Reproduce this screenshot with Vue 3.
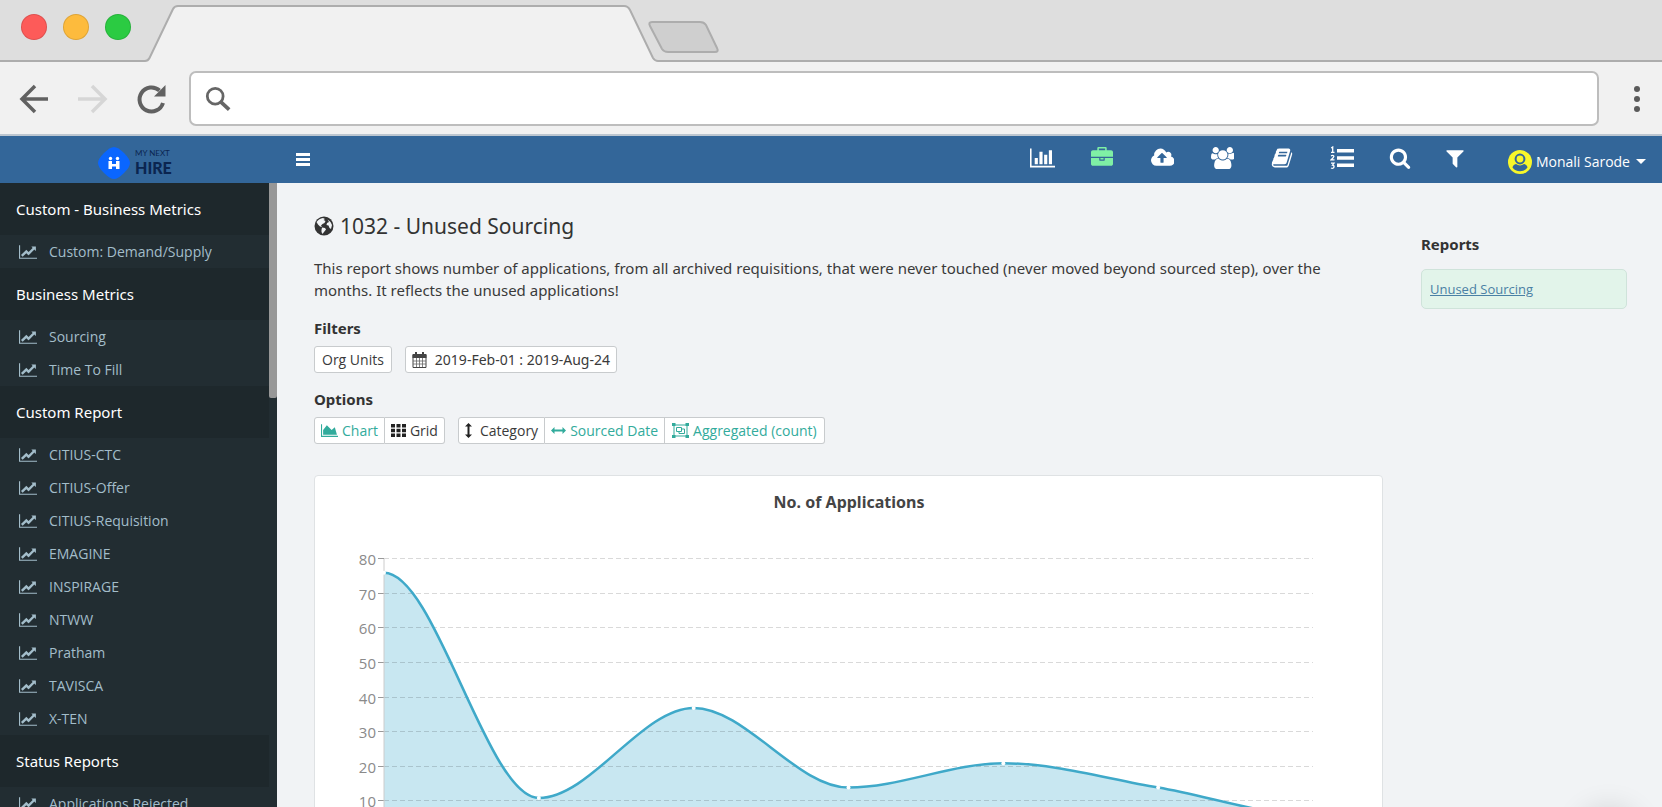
<script setup>
const icons = {
  line: { w: 2048, d: 'M2048 1536v128h-2048v-1536h128v1408h1920zm-128-1248v435q0 21-19.5 29.5t-35.5-7.5l-121-121-633 633q-10 10-23 10t-23-10l-233-233-416 416-192-192 585-585q10-10 23-10t23 10l233 233 464-464-121-121q-16-16-7.5-35.5t29.5-19.5h435q14 0 23 9t9 23z' },
  bar: { w: 2048, d: 'M640 896v512h-256v-512h256zm384-512v1024h-256v-1024h256zm1024 1152v128h-2048v-1536h128v1408h1920zm-640-896v768h-256v-768h256zm384-384v1152h-256v-1152h256z' },
  area: { w: 2048, d: 'M2048 1536v128h-2048v-1536h128v1408h1920zm-384-1024l256 896h-1664v-576l448-576 576 576z' },
  briefcase: { w: 1792, d: 'M640 256h512v-128h-512v128zm1152 640v480q0 66-47 113t-113 47h-1472q-66 0-113-47t-47-113v-480h672v160q0 26 19 45t45 19h320q26 0 45-19t19-45v-160h672zm-768 0v128h-256v-128h256zm768-480v384h-1792v-384q0-66 47-113t113-47h352v-160q0-40 28-68t68-28h576q40 0 68 28t28 68v160h352q66 0 113 47t47 113z' },
  cloud: { w: 1920, d: 'M1280 864q0-14-9-23l-352-352q-9-9-23-9t-23 9l-351 351q-10 12-10 24 0 14 9 23t23 9h224v352q0 13 9.5 22.5t22.5 9.5h192q13 0 22.5-9.5t9.5-22.5v-352h224q13 0 22.5-9.5t9.5-22.5zm640 288q0 159-112.5 271.5t-271.5 112.5h-1088q-185 0-316.5-131.5t-131.5-316.5q0-130 70-240t188-165q-2-30-2-43 0-212 150-362t362-150q156 0 285.5 87t188.5 231q71-62 166-62 106 0 181 75t75 181q0 76-41 138 130 31 213.5 135.5t83.5 238.5z' },
  users: { w: 1920, d: 'M593 896q-162 5-265 128h-134q-82 0-138-40.5t-56-118.5q0-353 124-353 6 0 43.5 21t97.5 42.5 119 21.5q67 0 133-23-5 37-5 66 0 159 93 293zm1071 637q0 120-73 189.5t-194 69.5h-874q-121 0-194-69.5t-73-189.5q0-53 3.5-103.5t14-109 26.5-108.5 43-97.5 62-81 85.5-53.5 111.5-20q10 0 43 21.5t73 48 107 48 135 21.5 135-21.5 107-48 73-48 43-21.5q61 0 111.5 20t85.5 53.5 62 81 43 97.5 26.5 108.5 14 109 3.5 103.5zm-1024-1277q0 106-75 181t-181 75-181-75-75-181 75-181 181-75 181 75 75 181zm704 384q0 159-112.5 271.5t-271.5 112.5-271.5-112.5-112.5-271.5 112.5-271.5 271.5-112.5 271.5 112.5 112.5 271.5zm576 225q0 78-56 118.5t-138 40.5h-134q-103-123-265-128 93-134 93-293 0-29-5-66 66 23 133 23 59 0 119-21.5t97.5-42.5 43.5-21q124 0 124 353zm-128-609q0 106-75 181t-181 75-181-75-75-181 75-181 181-75 181 75 75 181z' },
  book: { w: 1792, d: 'M1703 478q40 57 18 129l-275 906q-19 64-76.5 107.5t-122.5 43.5h-923q-77 0-148.5-53.5t-99.5-131.5q-24-67-2-127 0-4 3-27t4-37q1-8-3-21.5t-3-19.5q2-11 8-21t16.5-23.5 16.5-23.5q23-38 45-91.5t30-91.5q3-10 .5-30t-.5-28q3-11 17-28t17-23q21-36 42-92t25-90q1-9-2.5-32t.5-28q4-13 22-30.5t22-22.5q19-26 42.5-84.5t27.5-96.5q1-8-3-25.5t-2-26.5q2-8 9-18t18-23 17-21q8-12 16.5-30.5t15-35 16-36 19.5-32 26.5-23.5 36-11.5 47.5 5.5l-1 3q38-9 51-9h761q74 0 114 56t18 130l-274 906q-36 119-71.5 153.5t-128.5 34.5h-869q-27 0-38 15-11 16-1 43 24 70 144 70h923q29 0 56-15.5t35-41.5l300-987q7-22 5-57 38 15 59 43zm-1064 2q-4 13 2 22.5t20 9.5h608q13 0 25.5-9.5t16.5-22.5l21-64q4-13-2-22.5t-20-9.5h-608q-13 0-25.5 9.5t-16.5 22.5zm-83 256q-4 13 2 22.5t20 9.5h608q13 0 25.5-9.5t16.5-22.5l21-64q4-13-2-22.5t-20-9.5h-608q-13 0-25.5 9.5t-16.5 22.5z' },
  search: { w: 1792, d: 'M1216 832q0-185-131.5-316.5t-316.5-131.5-316.5 131.5-131.5 316.5 131.5 316.5 316.5 131.5 316.5-131.5 131.5-316.5zm512 832q0 52-38 90t-90 38q-54 0-90-38l-343-342q-179 124-399 124-143 0-273.5-55.5t-225-150-150-225-55.5-273.5 55.5-273.5 150-225 225-150 273.5-55.5 273.5 55.5 225 150 150 225 55.5 273.5q0 220-124 399l343 343q37 37 37 90z' },
  filter: { w: 1792, d: 'M1595 295q17 41-14 70l-493 493v742q0 42-39 59-13 5-25 5-27 0-45-19l-256-256q-19-19-19-45v-486l-493-493q-31-29-14-70 17-39 59-39h1280q42 0 59 39z' }
}

const actions = [
  { id: 'bar', label: 'Analytics' },
  { id: 'briefcase', label: 'Requisitions' },
  { id: 'cloud', label: 'Upload' },
  { id: 'users', label: 'Candidates' },
  { id: 'book', label: 'Directory' },
  { id: 'list', label: 'Tasks' },
  { id: 'search', label: 'Search' },
  { id: 'filter', label: 'Filter' }
]

const groups = [
  { title: 'Custom - Business Metrics', items: ['Custom: Demand/Supply'] },
  { title: 'Business Metrics', items: ['Sourcing', 'Time To Fill'] },
  {
    title: 'Custom Report',
    items: ['CITIUS-CTC', 'CITIUS-Offer', 'CITIUS-Requisition', 'EMAGINE', 'INSPIRAGE', 'NTWW', 'Pratham', 'TAVISCA', 'X-TEN']
  },
  { title: 'Status Reports', items: ['Applications Rejected'] }
]

// Plot geometry, in the units of the chart's viewBox
const left = 69
const right = 998
const top = 83
const base = 360
const max = 80
const values = [76, 11, 37, 14, 21, 14, 6]
const step = (right - left) / (values.length - 1)
const yOf = (v) => base - (v / max) * (base - top)
const points = values.map((v, i) => ({ x: left + i * step, y: yOf(v) }))
const ticks = [80, 70, 60, 50, 40, 30, 20, 10, 0].map((v) => ({ v, y: Math.round(yOf(v)) - 0.5 }))

// Flat tangents at peaks and troughs, averaged slope elsewhere
const slopes = points.map((p, i) => {
  if (i === 0 || i === points.length - 1) return 0
  const a = (p.y - points[i - 1].y) / step
  const b = (points[i + 1].y - p.y) / step
  return a * b <= 0 ? 0 : (a + b) / 2
})
const curve = points.reduce((d, p, i) => {
  if (i === 0) return `M${p.x} ${p.y}`
  const q = points[i - 1]
  const k = step / 3
  return `${d}C${q.x + k} ${q.y + slopes[i - 1] * k} ${p.x - k} ${p.y - slopes[i] * k} ${p.x} ${p.y}`
}, '')
const area = `${curve}V${base}H${left}Z`
</script>

<template>
  <div class="window">
    <header class="chrome">
      <div class="tabstrip">
        <div class="lights"><i class="red"></i><i class="amber"></i><i class="green"></i></div>
        <svg class="tabshape" width="580" height="63" viewBox="0 0 580 63" aria-hidden="true">
          <path d="M0 63V61H5Q8 61 9.500 58L33 9Q34.500 6 38 6H484Q488 6 490 10L513 58Q515 61 518 61H580V63Z" fill="#f1f1f1" />
          <path d="M0 61H5Q8 61 9.500 58L33 9Q34.500 6 38 6H484Q488 6 490 10L513 58Q515 61 518 61H580" fill="none" stroke="#adadad" stroke-width="2" />
          <path d="M514 22H560Q564 22 566 25L577 48Q579 52 575 52H528Q524 52 522 49L510 26Q508 22 512 22Z" fill="#cfcfcf" stroke="#adadad" stroke-width="2" />
        </svg>
        <div class="striprest"></div>
      </div>
      <div class="toolbar">
        <button type="button" class="nav" aria-label="Back">
          <svg width="32" height="32" viewBox="0 0 32 32"><path d="M30 16H4M17 3L4 16L17 29" fill="none" stroke="#616161" stroke-width="3.500" /></svg>
        </button>
        <button type="button" class="nav" aria-label="Forward">
          <svg width="32" height="32" viewBox="0 0 32 32"><path d="M1 16H27M15 3L28 16L15 29" fill="none" stroke="#d6d6d6" stroke-width="3.500" /></svg>
        </button>
        <button type="button" class="nav" aria-label="Reload">
          <svg width="32" height="32" viewBox="0 0 32 32"><path d="M27 20A12 12 0 1 1 23.500 7.500" fill="none" stroke="#616161" stroke-width="4" /><path d="M29.500 2V13.500H18Z" fill="#616161" /></svg>
        </button>
        <div class="address">
          <svg width="26" height="26" viewBox="0 0 28 28" aria-hidden="true"><circle cx="11" cy="11" r="8.500" fill="none" stroke="#666" stroke-width="3" /><path d="M17 17L26 25.500" stroke="#666" stroke-width="4" /></svg>
          <input type="text" aria-label="Address" />
        </div>
        <button type="button" class="more" aria-label="Menu"><i></i><i></i><i></i></button>
      </div>
    </header>

    <header class="topbar">
      <a class="brand" href="#">
        <svg width="32" height="32" viewBox="0 0 32 32" aria-hidden="true">
          <path d="M16 0Q20 0 26 6Q32 12 32 16Q32 20 26 26Q20 32 16 32Q12 32 6 26Q0 20 0 16Q0 12 6 6Q12 0 16 0Z" fill="#0a66ff" />
          <g fill="#fff"><circle cx="12.500" cy="11.500" r="1.700" /><circle cx="19.500" cy="11.500" r="1.700" /><path d="M10.500 14H14V17H18V14H21.500V22H18V19.500H14V22H10.500Z" /></g>
        </svg>
        <span class="wordmark"><small>MY NEXT</small><b>HIRE</b></span>
      </a>
      <button type="button" class="burger" aria-label="Toggle navigation"><i></i><i></i><i></i></button>
      <nav class="actions" aria-label="Main">
        <button v-for="a in actions" :key="a.id" type="button" :class="a.id" :aria-label="a.label">
          <svg v-if="a.id === 'list'" width="24" height="24" viewBox="0 0 24 24">
            <path d="M7 3H24V6.500H7ZM7 10.200H24V13.700H7ZM7 17.400H24V20.900H7Z" fill="#fff" />
            <path d="M1.200 2L2.700 1V6M1 6.300H4.500M1 9.800Q4 8.800 3.800 10.600Q3.500 11.500 1.200 13.800H4.500M1 17.200H4L2.500 19.200Q4.300 19.400 4 21Q3.300 23 1 22" fill="none" stroke="#fff" stroke-width="1.300" />
          </svg>
          <svg v-else class="glyph" :viewBox="`0 0 ${icons[a.id].w} 1792`"><path :d="icons[a.id].d" /></svg>
        </button>
      </nav>
      <button type="button" class="user">
        <svg width="24" height="24" viewBox="0 0 24 24" aria-hidden="true">
          <circle cx="12" cy="12" r="12" fill="#f7f72a" />
          <path d="M4.500 17.500Q5 14.500 8 14Q12 16.800 16 14Q19 14.500 19.500 17.500Q16.800 21.300 12 21.300Q7.200 21.300 4.500 17.500Z" fill="#336699" />
          <circle cx="12" cy="9" r="4.400" fill="#f7f72a" stroke="#336699" stroke-width="2" />
          <path d="M6.500 17.500Q7.500 16.300 9 16.500Q12 17.800 15 16.500Q16.500 16.300 17.500 17.500Q15 19.600 12 19.600Q9 19.600 6.500 17.500Z" fill="#336699" />
        </svg>
        <span>Monali Sarode</span>
        <i class="caret"></i>
      </button>
    </header>

    <div class="body">
      <aside class="sidebar">
        <nav class="menu" aria-label="Reports menu">
          <section v-for="g in groups" :key="g.title">
            <h2>{{ g.title }}</h2>
            <ul>
              <li v-for="item in g.items" :key="item">
                <a href="#"><svg width="18" height="16" viewBox="0 0 2048 1792" aria-hidden="true"><path :d="icons.line.d" /></svg>{{ item }}</a>
              </li>
            </ul>
          </section>
        </nav>
        <div class="track"><div class="thumb"></div></div>
      </aside>

      <main class="content">
        <h1>
          <svg width="20" height="20" viewBox="0 0 20 20" aria-hidden="true">
            <circle cx="10" cy="10" r="9.500" fill="#333" />
            <path d="M2.500 6Q5 2.500 9 2L11 3L9.500 4L11.500 5L10.500 7L8.500 8L7 9.500L8 11L6 10.500L4 8.500ZM8 11.500L11 12L12 13.500L10 16L8.500 18L7.500 16L7.500 14ZM13.500 3.500Q17 5.500 18 9L17 13L15.500 12L14.500 9.500L12.500 9L13 7L15 6Z" fill="#f1f3f5" />
          </svg>
          1032 - Unused Sourcing
        </h1>
        <p class="lead">This report shows number of applications, from all archived requisitions, that were never touched (never moved beyond sourced step), over the months. It reflects the unused applications!</p>

        <h3>Filters</h3>
        <div class="row">
          <button type="button" class="btn">Org Units</button>
          <button type="button" class="btn date">
            <svg width="15" height="16" viewBox="0 0 15 16" aria-hidden="true">
              <path d="M1 2.500H14V15.500H1Z" fill="#fff" stroke="#444" />
              <path d="M.5 2.500H14.500V6H.5Z" fill="#444" />
              <path d="M1 9H14M1 12H14M4.500 6V15M7.500 6V15M10.500 6V15" stroke="#666" stroke-width=".8" />
              <path d="M4 0V4M11 0V4" stroke="#444" stroke-width="2" />
            </svg>
            2019-Feb-01 : 2019-Aug-24
          </button>
        </div>

        <h3>Options</h3>
        <div class="row">
          <div class="group">
            <button type="button" class="btn on"><svg width="17" height="15" viewBox="0 0 2048 1792" aria-hidden="true"><path :d="icons.area.d" fill="currentColor" /></svg>Chart</button>
            <button type="button" class="btn"><svg width="15" height="13" viewBox="0 0 15 13" aria-hidden="true"><path d="M0 0H4V3.500H0ZM5.500 0H9.500V3.500H5.500ZM11 0H15V3.500H11ZM0 4.700H4V8.200H0ZM5.500 4.700H9.500V8.200H5.500ZM11 4.700H15V8.200H11ZM0 9.400H4V12.900H0ZM5.500 9.400H9.500V12.900H5.500ZM11 9.400H15V12.900H11Z" fill="#222" /></svg>Grid</button>
          </div>
          <div class="group">
            <button type="button" class="btn category"><svg width="7" height="15" viewBox="0 0 7 15" aria-hidden="true"><path d="M3.500 0L7 3.500H4.500V11.500H7L3.500 15L0 11.500H2.500V3.500H0Z" fill="#222" /></svg>Category</button>
            <button type="button" class="btn on"><svg width="15" height="7" viewBox="0 0 15 7" aria-hidden="true"><path d="M0 3.500L3.500 0V2.500H11.500V0L15 3.500L11.500 7V4.500H3.500V7Z" fill="currentColor" /></svg>Sourced Date</button>
            <button type="button" class="btn on wide"><svg width="17" height="15" viewBox="0 0 17 15" aria-hidden="true"><path d="M2 2H15V13H2Z M4.500 4.500H9.500V8.500H4.500Z M9.500 6H12.500V10.500H7V8.500" fill="none" stroke="currentColor" /><path d="M0 0H3.500V3H0ZM13.500 0H17V3H13.500ZM0 12H3.500V15H0ZM13.500 12H17V15H13.500Z" fill="currentColor" /></svg>Aggregated (count)</button>
          </div>
        </div>

        <section class="card">
          <svg viewBox="0 0 1067 420" role="img" aria-label="No. of Applications">
            <text class="title" x="534" y="32" text-anchor="middle">No. of Applications</text>
            <path :d="area" fill="#c8e7f1" />
            <g v-for="t in ticks" :key="t.v">
              <line :x1="left" :x2="right" :y1="t.y" :y2="t.y" stroke="#000" stroke-opacity=".15" stroke-dasharray="5 3" />
              <line :x1="left - 6" :x2="left" :y1="t.y" :y2="t.y" stroke="#999" />
              <text class="tick" :x="left - 8" :y="t.y + 6" text-anchor="end">{{ t.v }}</text>
            </g>
            <line :x1="left" :x2="left" :y1="top" :y2="base" stroke="#ccc" />
            <path :d="curve" fill="none" stroke="#3fa9c9" stroke-width="2.500" />
            <circle v-for="p in points" :key="p.x" :cx="p.x" :cy="p.y" r="2" fill="#fff" />
          </svg>
        </section>
      </main>

      <aside class="reports">
        <h3>Reports</h3>
        <a href="#">Unused Sourcing</a>
      </aside>
    </div>
    <button type="button" class="chat" aria-label="Chat"></button>
  </div>
</template>

<style>
body { margin: 0; }
</style>

<style scoped>
* { box-sizing: border-box; }
.window {
  height: 100vh;
  display: flex;
  flex-direction: column;
  overflow: hidden;
  position: relative;
  background: #f1f3f5;
  color: #3a3a3a;
  font: 14px/22px "Open Sans", "Noto Sans", sans-serif;
}
button { font: inherit; color: inherit; background: none; border: 0; padding: 0; cursor: pointer; }
svg { display: block; flex: none; }
h1, h2, h3, p, ul { margin: 0; padding: 0; }
h1, h2, h3, .lead, .date, .title { font-family: "Noto Sans", "Open Sans", sans-serif; }

.chrome { flex: none; background: #f1f1f1; border-bottom: 2px solid #bcc6d0; }
.tabstrip { display: flex; height: 63px; background: linear-gradient(#dedede 61px, #f1f1f1 61px); }
.lights { flex: none; width: 140px; padding: 14px 0 0 21px; display: flex; gap: 16px; }
.lights i { width: 26px; height: 26px; border-radius: 50%; border: 1px solid rgba(0, 0, 0, .12); }
.red { background: #fd5b59; }
.amber { background: #fdbb3d; }
.green { background: #2bcb42; }
.striprest { flex: 1; }
.lights, .striprest { height: 62px; border-bottom: 2px solid #adadad; }
.toolbar { display: flex; align-items: center; height: 71px; padding: 0 17px 0 18px; }
.nav { width: 32px; margin-right: 27px; }
.nav:nth-child(3) { margin-right: 21px; }
.address { flex: 1; display: flex; align-items: center; height: 55px; padding: 0 14px; background: #fff; border: 2px solid #bdbdbd; border-radius: 7px; }
.address input { flex: 1; height: 40px; margin-left: 8px; border: 0; outline: 0; font: inherit; background: transparent; }
.more { width: 16px; margin-left: 30px; display: flex; flex-direction: column; align-items: center; gap: 4px; }
.more i { width: 6px; height: 6px; border-radius: 50%; background: #5a5a5a; }

.topbar { flex: none; display: flex; align-items: center; height: 47px; background: #336699; color: #fff; }
.brand { width: 277px; padding: 6px 0 0 98px; display: flex; align-items: center; gap: 5px; color: #0b2550; text-decoration: none; }
.wordmark { display: flex; flex-direction: column; }
.wordmark small { font: 8px/10px Lato, sans-serif; }
.wordmark b { font: 900 16px/20px Lato, sans-serif; }
.burger { width: 14px; margin-left: 19px; display: grid; gap: 2px; }
.burger i { height: 3px; background: #fff; }
.actions { margin: 0 0 4px auto; display: flex; align-items: center; gap: 35px; }
.actions button { width: 25px; display: flex; justify-content: center; }
.actions .filter, .actions .search { width: 20px; }
.glyph { height: 22px; fill: #fff; }
.briefcase .glyph { fill: #7ff0a5; }
.user { display: flex; align-items: center; gap: 4px; margin: 4px 16px 0 43px; }
.caret { margin-left: 2px; border: 5px solid transparent; border-top-color: #fff; border-bottom: 0; }

.body { flex: 1; min-height: 0; display: flex; align-items: stretch; }
.sidebar { flex: none; width: 277px; display: flex; background: #222d32; overflow: hidden; }
.menu { flex: 1; }
.menu h2 { padding: 0 16px; font-size: 15px; font-weight: 400; line-height: 52px; color: #fff; background: #1e282c; }
.menu ul { list-style: none; }
.menu a { display: flex; align-items: center; gap: 12px; height: 33px; padding-left: 19px; color: #a3bdca; text-decoration: none; white-space: nowrap; }
.menu svg { fill: #a3bdca; }
.track { width: 8px; }
.thumb { height: 215px; background: #979797; border-radius: 0 0 2px 2px; }

.content { flex: 1; min-width: 0; padding: 26px 0 0 37px; overflow: hidden; }
h1 { display: flex; align-items: center; gap: 6px; font-size: 21px; font-weight: 400; line-height: 34px; color: #333; }
.lead { margin-top: 14px; padding-right: 34px; font-size: 15px; }
h3 { font-size: 15px; font-weight: 700; line-height: 22px; color: #333; }
.lead + h3 { margin-top: 16px; }
.row { display: flex; gap: 13px; margin-top: 7px; }
.row + h3 { margin-top: 15px; }
.btn { display: flex; align-items: center; gap: 4px; height: 27px; padding: 0 7px; background: #fff; border: 1px solid #c8cbcd; border-radius: 3px; white-space: nowrap; }
.date { gap: 8px; padding: 0 6px; }
.on { color: #32ab9c; }
.group { display: flex; }
.group .btn { padding: 0 6px; border-radius: 0; }
.group .category { gap: 8px; }
.group .wide { padding: 0 7px; }
.group .btn + .btn { border-left: 0; }
.group .btn:first-child { border-radius: 3px 0 0 3px; }
.group .btn:last-child { border-radius: 0 3px 3px 0; }
.card { margin-top: 31px; background: #fff; border: 1px solid #dfe2e4; border-radius: 4px; }
.card svg { width: 100%; }
.title { font-size: 16px; font-weight: 700; fill: #444; }
.tick { font-size: 15px; fill: #8a8a8a; }

.reports { flex: none; width: 279px; padding: 50px 35px 0 38px; }
.reports a { display: block; margin-top: 14px; padding: 8px; border: 1px solid #cfe3da; border-radius: 5px; background: #e2f4ea; color: #4a80a5; font-size: 13px; text-decoration: underline; }
.chat { position: absolute; right: 23px; bottom: -62px; width: 60px; height: 60px; border-radius: 50%; background: #fff; box-shadow: 0 0 30px rgba(0, 0, 0, .14); }
</style>
